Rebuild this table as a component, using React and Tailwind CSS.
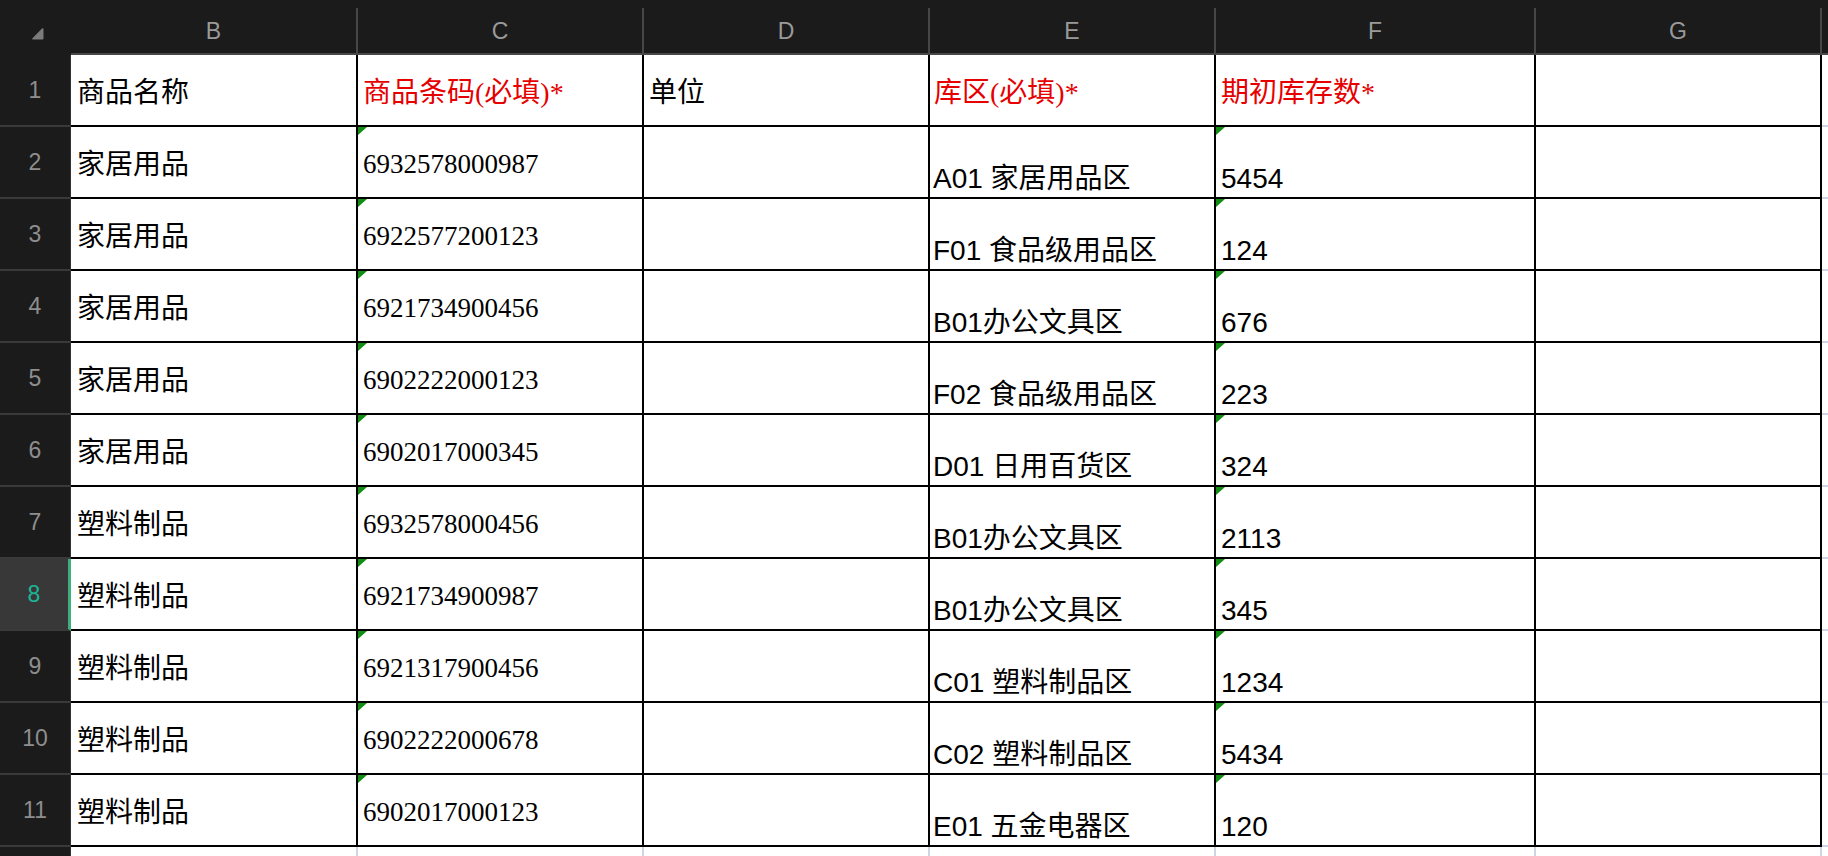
import React from "react";

const serif = "font-['Liberation_Serif','Noto_Sans_CJK_SC',serif]";
const sans = "font-['Liberation_Sans','Noto_Sans_CJK_SC',sans-serif]";

const cols = [
  { letter: "B", w: "w-[287px]" },
  { letter: "C", w: "w-[286px]" },
  { letter: "D", w: "w-[286px]" },
  { letter: "E", w: "w-[286px]" },
  { letter: "F", w: "w-[320px]" },
  { letter: "G", w: "w-[286px]" },
];

const rows = [
  ["家居用品", "6932578000987", "A01 家居用品区", "5454"],
  ["家居用品", "6922577200123", "F01 食品级用品区", "124"],
  ["家居用品", "6921734900456", "B01办公文具区", "676"],
  ["家居用品", "6902222000123", "F02 食品级用品区", "223"],
  ["家居用品", "6902017000345", "D01 日用百货区", "324"],
  ["塑料制品", "6932578000456", "B01办公文具区", "2113"],
  ["塑料制品", "6921734900987", "B01办公文具区", "345"],
  ["塑料制品", "6921317900456", "C01 塑料制品区", "1234"],
  ["塑料制品", "6902222000678", "C02 塑料制品区", "5434"],
  ["塑料制品", "6902017000123", "E01 五金电器区", "120"],
];

function Flag() {
  return (
    <span className="absolute left-0 top-0 h-0 w-0 border-t-[8px] border-r-[9px] border-t-[#138c13] border-r-transparent" />
  );
}

function RowHead({ n, active }) {
  return (
    <div
      className={`flex w-[71px] shrink-0 items-center justify-center border-b-2 border-b-[#3a3a3a] text-[23px] ${sans} ${
        active
          ? "bg-[#383838] text-[#1db597] border-r-[3px] border-r-[#3dae7e]"
          : "bg-[#1b1b1b] text-[#8e8e8e] border-r border-r-[#333]"
      }`}
    >
      {n}
    </div>
  );
}

export default function App() {
  return (
    <div className="h-[856px] w-full overflow-hidden bg-white">
      {/* column letters */}
      <div className="flex h-[55px] bg-[#1b1b1b]">
        <div className="w-[71px] shrink-0 pl-[31px] pt-[27px]">
          <svg width="13" height="13" viewBox="0 0 13 13">
            <path d="M11 1.5 Q12.5 0.5 12.5 2.5 L12.5 11.5 Q12.5 12.5 11.5 12.5 L2 12.5 Q0.5 12.5 1.5 11.2 Z" fill="#7b7b7b" />
          </svg>
        </div>
        {cols.map((c) => (
          <div key={c.letter} className={`${c.w} flex shrink-0 flex-col border-b-2 border-b-[#474747] pt-2`}>
            <div className={`flex flex-1 items-center justify-center border-r-2 border-r-[#474747] pt-[2px] text-[23px] text-[#9a9a9a] ${sans}`}>
              {c.letter}
            </div>
          </div>
        ))}
        <div className="flex-1 border-b-2 border-b-[#474747]" />
      </div>

      {/* row 1 */}
      <div className="flex h-[72px]">
        <RowHead n={1} />
        <div className={`${cols[0].w} flex shrink-0 items-center border-r-2 border-b-2 border-black pl-[6px] pt-[6px] text-[28px] leading-none text-black ${serif}`}>
          商品名称
        </div>
        <div className={`${cols[1].w} flex shrink-0 items-center border-r-2 border-b-2 border-black pl-[5px] pt-[6px] text-[28px] leading-none text-[#e60000] ${serif}`}>
          商品条码(必填)*
        </div>
        <div className={`${cols[2].w} flex shrink-0 items-center border-r-2 border-b-2 border-black pl-[5px] pt-[6px] text-[28px] leading-none text-black ${serif}`}>
          单位
        </div>
        <div className={`${cols[3].w} flex shrink-0 items-center border-r-2 border-b-2 border-black pl-[4px] pt-[6px] text-[28px] leading-none text-[#e60000] ${serif}`}>
          库区(必填)*
        </div>
        <div className={`${cols[4].w} flex shrink-0 items-center border-r-2 border-b-2 border-black pl-[5px] pt-[6px] text-[28px] leading-none text-[#e60000] ${serif}`}>
          期初库存数*
        </div>
        <div className={`${cols[5].w} shrink-0 border-r-2 border-b-2 border-black`} />
        <div className="flex-1 border-b-2 border-[#d0d5e3]" />
      </div>

      {rows.map((r, i) => (
        <div key={i} className="flex h-[72px]">
          <RowHead n={i + 2} active={i + 2 === 8} />
          <div className={`${cols[0].w} flex shrink-0 items-center border-r-2 border-b-2 border-black pl-[6px] pt-[6px] text-[28px] leading-none text-black ${serif}`}>
            {r[0]}
          </div>
          <div className={`${cols[1].w} relative flex shrink-0 items-center border-r-2 border-b-2 border-black pl-[5px] pt-[4px] text-[27px] leading-none text-black ${serif}`}>
            <Flag />
            {r[1]}
          </div>
          <div className={`${cols[2].w} shrink-0 border-r-2 border-b-2 border-black`} />
          <div className={`${cols[3].w} flex shrink-0 items-end border-r-2 border-b-2 border-black pb-[4px] pl-[3px] text-[28px] leading-none text-black ${sans}`}>
            {r[2]}
          </div>
          <div className={`${cols[4].w} relative flex shrink-0 items-end border-r-2 border-b-2 border-black pb-[4px] pl-[5px] text-[28px] leading-none text-black ${sans}`}>
            <Flag />
            {r[3]}
          </div>
          <div className={`${cols[5].w} shrink-0 border-r-2 border-b-2 border-black`} />
          <div className="flex-1 border-b-2 border-[#d0d5e3]" />
        </div>
      ))}

      {/* partial next row */}
      <div className="flex h-[20px]">
        <div className="w-[71px] shrink-0 border-r border-r-[#333] bg-[#1b1b1b]" />
        {cols.map((c) => (
          <div key={c.letter} className={`${c.w} shrink-0 border-r-2 border-[#d0d5e3]`} />
        ))}
        <div className="flex-1" />
      </div>
    </div>
  );
}
